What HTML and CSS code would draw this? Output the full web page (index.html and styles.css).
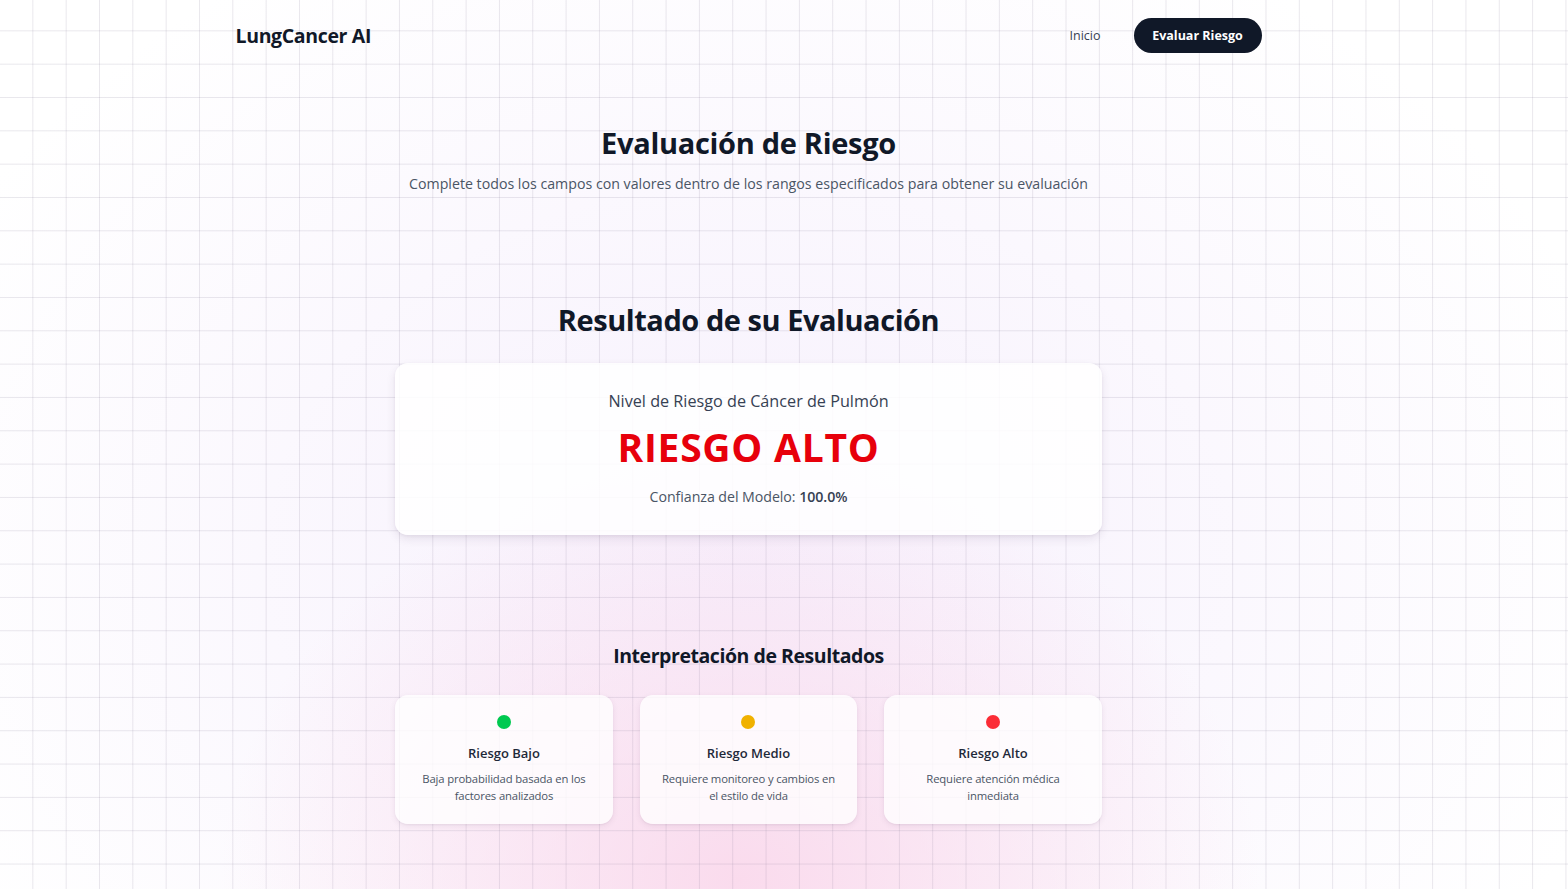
FILE: index.html
```html
<!DOCTYPE html>
<html lang="es">
<head>
<meta charset="utf-8">
<title>LungCancer AI</title>
<link rel="stylesheet" href="styles.css">
</head>
<body>
<div class="page">
  <header class="nav">
    <div class="nav-inner">
      <div class="logo">LungCancer AI</div>
      <nav class="links">
        <a class="link" href="#">Inicio</a>
        <a class="btn" href="#">Evaluar Riesgo</a>
      </nav>
    </div>
  </header>
  <main class="main">
    <h1 class="title">Evaluación de Riesgo</h1>
    <p class="subtitle">Complete todos los campos con valores dentro de los rangos especificados para obtener su evaluación</p>

    <h2 class="result-title">Resultado de su Evaluación</h2>
    <section class="result-card">
      <p class="result-label">Nivel de Riesgo de Cáncer de Pulmón</p>
      <p class="result-value">RIESGO ALTO</p>
      <p class="result-conf">Confianza del Modelo: <strong>100.0%</strong></p>
    </section>

    <h3 class="interp-title">Interpretación de Resultados</h3>
    <div class="interp-grid">
      <div class="interp-card">
        <span class="dot dot-green"></span>
        <h4 class="interp-name">Riesgo Bajo</h4>
        <p class="interp-desc">Baja probabilidad basada en los factores analizados</p>
      </div>
      <div class="interp-card">
        <span class="dot dot-yellow"></span>
        <h4 class="interp-name">Riesgo Medio</h4>
        <p class="interp-desc">Requiere monitoreo y cambios en el estilo de vida</p>
      </div>
      <div class="interp-card">
        <span class="dot dot-red"></span>
        <h4 class="interp-name">Riesgo Alto</h4>
        <p class="interp-desc">Requiere atención médica inmediata</p>
      </div>
    </div>
  </main>
</div>
</body>
</html>
```

FILE: styles.css
```css
* { box-sizing: border-box; }
html, body { margin: 0; padding: 0; }
body {
  min-height: 100vh;
  font-family: "Open Sans", "Noto Sans", Arial, sans-serif;
  color: #101828;
  background-color: #ffffff;
  background-image:
    linear-gradient(to right, transparent 32.3px, rgba(120, 110, 140, 0.16) 32.3px, rgba(120, 110, 140, 0.16) 33.333px),
    linear-gradient(to bottom, transparent 32.3px, rgba(120, 110, 140, 0.16) 32.3px, rgba(120, 110, 140, 0.16) 33.333px),
    radial-gradient(ellipse 520px 420px at 740px 880px, rgba(250, 214, 234, 0.85), rgba(250, 214, 234, 0) 100%),
    radial-gradient(ellipse 900px 700px at 750px 560px, rgba(244, 236, 252, 0.8), rgba(244, 236, 252, 0) 100%);
  background-size: 33.333px 33.333px, 33.333px 33.333px, 100% 100%, 100% 100%;
  background-position: 0 0, 0 -2px, 0 0, 0 0;
  overflow: hidden;
}
.page {
  width: 1497px;
}
.nav {
  height: 70px;
}
.nav-inner {
  max-width: 1066px;
  margin: 0 auto;
  padding: 0 20px;
  height: 70px;
  display: flex;
  align-items: center;
  justify-content: space-between;
}
.logo {
  font-size: 19.5px;
  font-weight: 700;
  color: #101828;
  letter-spacing: -0.35px;
}
.links {
  display: flex;
  align-items: center;
  gap: 33px;
}
.link {
  font-size: 12.5px;
  color: #364153;
  text-decoration: none;
}
.btn {
  display: inline-flex;
  align-items: center;
  justify-content: center;
  height: 35px;
  width: 128px;
  border-radius: 18px;
  background: #101828;
  color: #fff;
  font-size: 12.5px;
  font-weight: 700;
  text-decoration: none;
}
.main {
  display: flex;
  flex-direction: column;
  align-items: center;
  padding-top: 55px;
}
.title {
  margin: 0;
  font-size: 29px;
  line-height: 36px;
  font-weight: 700;
  letter-spacing: -0.3px;
}
.subtitle {
  margin: 12px 0 0;
  font-size: 14.2px;
  line-height: 22px;
  color: #4a5565;
  letter-spacing: 0;
}
.result-title {
  margin: 107px 0 0;
  font-size: 29px;
  line-height: 36px;
  font-weight: 700;
  letter-spacing: -0.45px;
}
.result-card {
  margin-top: 25px;
  width: 707px;
  padding: 26px 20px 27px;
  border-radius: 13px;
  background: rgba(255, 255, 255, 0.85);
  box-shadow: 0 4px 10px rgba(60, 40, 80, 0.10), 0 1px 3px rgba(60, 40, 80, 0.06);
  display: flex;
  flex-direction: column;
  align-items: center;
}
.result-label {
  margin: 0;
  font-size: 16.2px;
  line-height: 24px;
  color: #364153;
  letter-spacing: 0;
}
.result-value {
  margin: 14px 0 0;
  font-size: 39px;
  line-height: 40px;
  font-weight: 700;
  color: #e7000b;
  letter-spacing: 0.75px;
}
.result-conf {
  margin: 19px 0 0;
  font-size: 14.2px;
  line-height: 22px;
  color: #4a5565;
  letter-spacing: -0.05px;
}
.result-conf strong {
  font-weight: 600;
  color: #364153;
}
.interp-title {
  margin: 107px 0 0;
  font-size: 19.5px;
  line-height: 28px;
  font-weight: 700;
  letter-spacing: -0.45px;
}
.interp-grid {
  margin-top: 25px;
  width: 707px;
  display: grid;
  grid-template-columns: repeat(3, 1fr);
  gap: 26.67px;
}
.interp-card {
  height: 129px;
  padding: 20px 18px;
  border-radius: 13px;
  background: rgba(255, 255, 255, 0.78);
  box-shadow: 0 2px 6px rgba(60, 40, 80, 0.08), 0 1px 2px rgba(60, 40, 80, 0.05);
  display: flex;
  flex-direction: column;
  align-items: center;
  text-align: center;
}
.dot {
  width: 14px;
  height: 14px;
  border-radius: 50%;
}
.dot-green { background: #00c950; }
.dot-yellow { background: #f0b100; }
.dot-red { background: #fb2c36; }
.interp-name {
  margin: 14px 0 0;
  font-size: 13px;
  line-height: 20px;
  font-weight: 600;
  color: #1e2939;
}
.interp-desc {
  margin: 7px 0 0;
  font-size: 11.3px;
  line-height: 17px;
  color: #4a5565;
  letter-spacing: -0.15px;
}
```
